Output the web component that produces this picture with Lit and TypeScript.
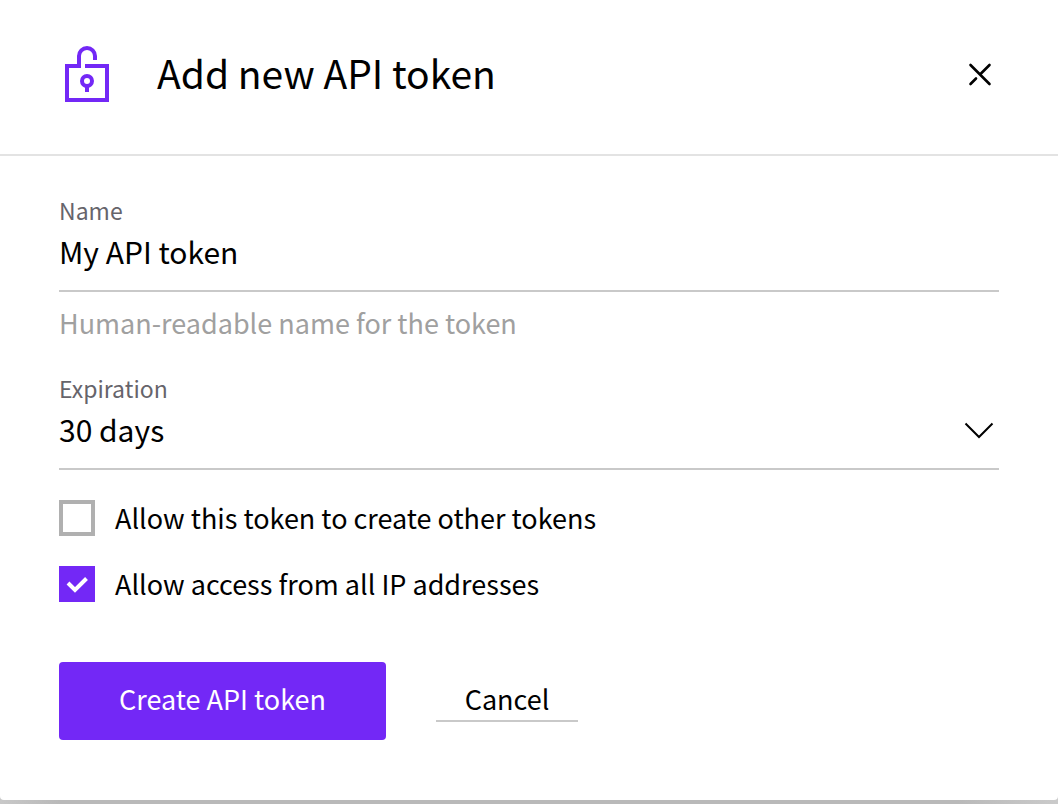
import { LitElement, html, css } from "lit";
import { customElement, state } from "lit/decorators.js";

@customElement("app-root")
export class AppRoot extends LitElement {
  static styles = css`
    :host {
      display: block;
      min-height: 100vh;
      background: linear-gradient(to right, #c8c8c8, #b9b9b9 60px, #b9b9b9 calc(100% - 100px), #cacaca);
      color: #000;
      font-family: "Noto Sans CJK SC", "Noto Sans", sans-serif;
    }
    * {
      box-sizing: border-box;
    }
    .dialog {
      background: #fff;
      border-radius: 0 0 4px 4px;
    }
    .header {
      display: flex;
      align-items: center;
      padding: 40px 59px 46px;
      border-bottom: 2px solid #e3e3e3;
    }
    .lock {
      flex: none;
      width: 56px;
      height: 68px;
    }
    .title {
      flex: 1;
      margin: 0 0 0 42px;
      padding-bottom: 4px;
      font-size: 39px;
      line-height: 64px;
      font-weight: 400;
    }
    .close {
      display: flex;
      padding: 0;
      border: 0;
      background: none;
    }
    .body {
      padding: 38px 59px 60px;
    }
    .field {
      display: flex;
      flex-direction: column;
      margin-bottom: 30px;
    }
    .label {
      font-size: 23px;
      line-height: 32px;
      color: #66646b;
    }
    .control {
      appearance: none;
      display: block;
      width: 100%;
      height: 66px;
      margin: 0;
      padding: 0 0 14px;
      border: 0;
      border-bottom: 2px solid #c9c9c9;
      border-radius: 0;
      background: none;
      color: inherit;
      font: 400 30px/50px "Noto Sans CJK SC", "Noto Sans", sans-serif;
      outline: none;
    }
    .hint {
      margin-top: 12px;
      font-size: 27px;
      line-height: 38px;
      color: #a0a0a0;
    }
    .select {
      position: relative;
    }
    .chevron {
      position: absolute;
      right: 4px;
      top: 16px;
      pointer-events: none;
    }
    .checks {
      display: flex;
      flex-direction: column;
      align-items: flex-start;
      gap: 30px;
    }
    .check {
      display: flex;
      align-items: center;
      gap: 20px;
      font-size: 27px;
      line-height: 36px;
    }
    .box {
      display: grid;
      flex: none;
    }
    .box > * {
      grid-area: 1 / 1;
    }
    .tick {
      appearance: none;
      width: 36px;
      height: 36px;
      margin: 0;
      border: 4px solid #b0b0b0;
      background: #fff;
    }
    .tick:checked {
      border-color: #7328f6;
      background: #7328f6;
    }
    .mark {
      pointer-events: none;
    }
    .actions {
      display: flex;
      align-items: center;
      gap: 50px;
      margin-top: 60px;
    }
    .create,
    .cancel {
      border: 0;
      color: inherit;
      font: 400 27px/38px "Noto Sans CJK SC", "Noto Sans", sans-serif;
    }
    .create {
      min-width: 327px;
      padding: 18px 32px 22px;
      border-radius: 4px;
      background: #7328f6;
      color: #fff;
    }
    .cancel {
      min-width: 142px;
      padding: 0 28px 2px;
      border-bottom: 2px solid #c9c9c9;
      background: none;
    }
  `;

  @state() private options = [
    { id: "create-tokens", text: "Allow this token to create other tokens", on: false },
    { id: "all-ips", text: "Allow access from all IP addresses", on: true },
  ];

  private toggle(id: string) {
    this.options = this.options.map((o) => (o.id === id ? { ...o, on: !o.on } : o));
  }

  render() {
    return html`
      <main class="dialog" role="dialog" aria-labelledby="title">
        <header class="header">
          <svg class="lock" viewBox="0 0 56 68" fill="none" stroke="#7328f6" stroke-width="4" aria-hidden="true">
            <path d="M26 26H48V60H8V26H20V16A8 8 0 0 1 36 16V20" />
            <circle cx="28" cy="41" r="5" />
            <path d="M28 46V52" />
          </svg>
          <h1 class="title" id="title">Add new API token</h1>
          <button class="close" type="button" aria-label="Close">
            <svg width="38" height="38" viewBox="0 0 38 38" fill="none" stroke="#000" stroke-width="2.6" stroke-linecap="round">
              <path d="M9.5 10L28.5 29M28.5 10L19 19.5M15 23.5L9.5 29" />
            </svg>
          </button>
        </header>
        <form class="body" @submit=${(e: Event) => e.preventDefault()}>
          <div class="field">
            <label class="label" for="name">Name</label>
            <input class="control" id="name" type="text" value="My API token" aria-describedby="hint" />
            <span class="hint" id="hint">Human-readable name for the token</span>
          </div>
          <div class="field">
            <label class="label" for="expiration">Expiration</label>
            <div class="select">
              <select class="control" id="expiration">
                <option>30 days</option>
                <option>60 days</option>
                <option>90 days</option>
              </select>
              <svg class="chevron" width="32" height="24" viewBox="0 0 32 24" fill="none" stroke="#000" stroke-width="2">
                <path d="M2.5 3.5L16 17L29.5 3.5" />
              </svg>
            </div>
          </div>
          <div class="checks">
            ${this.options.map(
              (o) => html`
                <label class="check" for=${o.id}>
                  <span class="box">
                    <input class="tick" type="checkbox" id=${o.id} .checked=${o.on} @change=${() => this.toggle(o.id)} />
                    ${o.on
                      ? html`<svg class="mark" width="36" height="36" viewBox="0 0 36 36" fill="none" stroke="#fff" stroke-width="4">
                          <path d="M9 17L16 24L27.5 12.5" />
                        </svg>`
                      : null}
                  </span>
                  <span>${o.text}</span>
                </label>
              `
            )}
          </div>
          <div class="actions">
            <button class="create" type="submit">Create API token</button>
            <button class="cancel" type="button">Cancel</button>
          </div>
        </form>
      </main>
    `;
  }
}
